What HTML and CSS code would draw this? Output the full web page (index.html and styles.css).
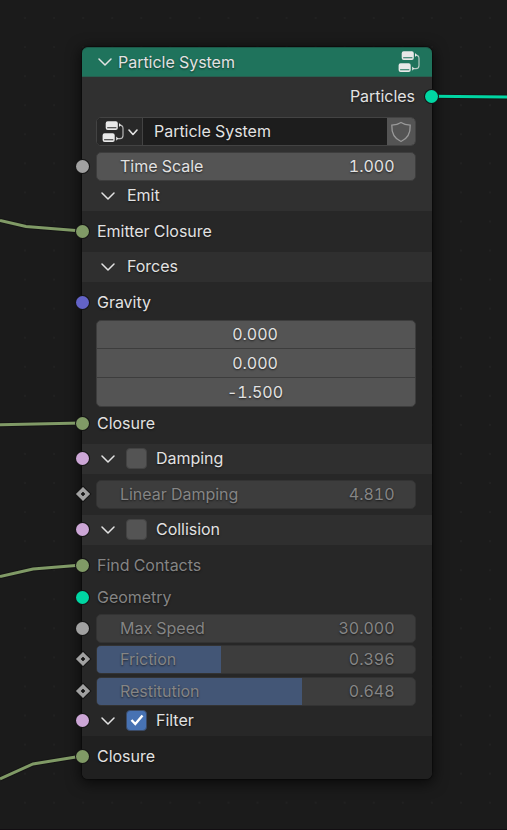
FILE: index.html
```html
<!DOCTYPE html>
<html lang="en">
<head>
<meta charset="utf-8">
<title>Particle System</title>
<link rel="stylesheet" href="styles.css">
</head>
<body>
<svg class="defs" width="0" height="0">
  <defs>
    <symbol id="chevron" viewBox="0 0 14 8"><path d="M1 1 L7 7 L13 1" fill="none" stroke="currentColor" stroke-width="1.5" stroke-linecap="round" stroke-linejoin="round"/></symbol>
    <symbol id="nodetree" viewBox="0 0 24 24">
      <path fill="currentColor" fill-rule="evenodd" d="M6.700 1.200h8.100a2 2 0 0 1 2 2v4.900a2 2 0 0 1-2 2H6.700a2 2 0 0 1-2-2V3.200a2 2 0 0 1 2-2zM6.200 7.200v1.100h9.200V7.200z"/>
      <path fill="currentColor" fill-rule="evenodd" d="M3.600 13.200h8.100a2 2 0 0 1 2 2v4.900a2 2 0 0 1-2 2H3.600a2 2 0 0 1-2-2v-4.900a2 2 0 0 1 2-2zM3.100 19.200v1.100h9.200v-1.100z"/>
      <path fill="none" stroke="currentColor" stroke-opacity=".75" stroke-width="1.200" d="M18.500 5.200 Q22 5.400 22 8.500 V15.500 Q22 18.600 19 18.600 H16"/>
      <path fill="currentColor" d="M18 3 L20 5 L18 7zM15.200 16.500 L17.300 18.600 L15.200 20.700z"/>
    </symbol>
  </defs>
</svg>
<main class="canvas">
  <svg class="wires" width="507" height="830" viewBox="0 0 507 830">
    <g class="wire-outline"><path d="M0 220.500 L26 226.500 L82 231"/><path d="M0 424.800 L82 423"/><path d="M0 576.500 L33 569 L82 565"/><path d="M0 779 L33 764 L82 756"/><path d="M432 96.300 L507 97"/></g>
    <g class="wire"><path d="M0 220.500 L26 226.500 L82 231"/><path d="M0 424.800 L82 423"/><path d="M0 576.500 L33 569 L82 565"/><path d="M0 779 L33 764 L82 756"/></g>
    <path class="wire geo" d="M432 96.300 L507 97"/>
  </svg>
  <section class="node">
    <header class="header">
      <svg class="chev"><use href="#chevron"/></svg>
      <span class="title">Particle System</span>
      <svg class="tree"><use href="#nodetree"/></svg>
    </header>
    <div class="group root">
      <div class="row output">Particles<i class="socket out teal"></i></div>
      <div class="row picker">
        <div class="id">
          <div class="browse"><svg class="tree"><use href="#nodetree"/></svg><svg class="mini" viewBox="0 0 10 7"><path d="M1 1 L5 5.500 L9 1"/></svg></div>
          <div class="name">Particle System</div>
          <div class="shield"><svg width="22" height="22" viewBox="0 0 22 22"><path d="M11 1.500 Q7.500 4 1.800 4.100 C1.500 12 3.500 17.500 11 20.500 C18.500 17.500 20.500 12 20.200 4.100 Q14.500 4 11 1.500z"/></svg></div>
        </div>
      </div>
      <div class="row scale"><i class="socket gray"></i><div class="field"><span>Time Scale</span><span>1.000</span></div></div>
      <div class="row panel"><svg class="chev"><use href="#chevron"/></svg>Emit</div>
    </div>
    <div class="group emit"><div class="row"><i class="socket olive"></i>Emitter Closure</div></div>
    <div class="row panel bar"><svg class="chev"><use href="#chevron"/></svg>Forces</div>
    <div class="group forces">
      <div class="row"><i class="socket blue"></i>Gravity</div>
      <div class="vector"><span>0.000</span><span>0.000</span><span>-1.500</span></div>
      <div class="row"><i class="socket olive"></i>Closure</div>
    </div>
    <div class="row panel bar"><i class="socket pink"></i><svg class="chev"><use href="#chevron"/></svg><b class="check"></b>Damping</div>
    <div class="group emit"><div class="row"><i class="socket diamond"></i><div class="field off"><span>Linear Damping</span><span>4.810</span></div></div></div>
    <div class="row panel bar"><i class="socket pink"></i><svg class="chev"><use href="#chevron"/></svg><b class="check"></b>Collision</div>
    <div class="group contacts">
      <div class="row dim"><i class="socket olive"></i>Find Contacts</div>
      <div class="row dim"><i class="socket teal"></i>Geometry</div>
      <div class="row slot"><i class="socket gray"></i><div class="field off"><span>Max Speed</span><span>30.000</span></div></div>
      <div class="row slot"><i class="socket diamond"></i><div class="field off"><em style="width:39.0%"></em><span>Friction</span><span>0.396</span></div></div>
      <div class="row slot tall"><i class="socket diamond"></i><div class="field off"><em style="width:64.500%"></em><span>Restitution</span><span>0.648</span></div></div>
      <div class="row panel"><i class="socket pink"></i><svg class="chev"><use href="#chevron"/></svg><b class="check on"><svg width="14" height="12" viewBox="0 0 14 12"><path d="M1.500 6 L5.300 10 L12.500 1.500"/></svg></b>Filter</div>
    </div>
    <div class="group last"><div class="row"><i class="socket olive"></i>Closure</div></div>
  </section>
</main>
</body>
</html>
```
FILE: styles.css
```css
* { box-sizing: border-box; }
body { margin: 0; background: #1b1b1b; font: 16px/20px Inter, "Liberation Sans", sans-serif; font-variant-numeric: tabular-nums; letter-spacing: -.03px; color: #e2e2e2; }
.defs { position: absolute; }
.canvas {
  position: relative; width: 507px; height: 830px; padding: 47px 75px 0 82px; overflow: hidden;
  background: radial-gradient(circle at 14.500px 14.500px, #212121 1px, transparent 1.500px) 10.500px 3.500px / 29.070px 29.070px #1b1b1b;
  border-bottom: 1px solid #120e12;
}
.wires { position: absolute; left: 0; top: 0; z-index: 1; }
.wires path { fill: none; }
.wire-outline path { stroke: #151515; stroke-width: 5; }
.wire path, path.wire { stroke: #809a66; stroke-width: 3; }
path.geo { stroke: #00d6a3; }
.node {
  display: flex; flex-direction: column; width: 350px; height: 732px; border-radius: 6px;
  background: #272727; text-shadow: 0 1px 2px rgba(0,0,0,.6);
  box-shadow: 0 0 1px 1px rgba(0,0,0,.35), 0 3px 14px 2px rgba(0,0,0,.6);
}
.header { display: flex; align-items: center; height: 30px; padding: 0 11px 0 16px; background: #1f735c; border-radius: 6px 6px 0 0; border-top: 1px solid #1c5a4a; border-bottom: 1px solid #275f50; }
.title { margin-left: 6px; flex: 1; }
.chev { width: 14px; height: 8px; flex: none; }
.tree { width: 24px; height: 24px; flex: none; color: #e8e8e8; }
.group { flex: none; }
.row { position: relative; display: flex; align-items: center; height: 32px; padding: 0 16px 0 15px; flex: none; }
.root { background: #303030; }
.row.output { height: 38px; justify-content: flex-end; padding-right: 17px; }
.row.picker { height: 33px; padding-left: 14px; }
.id { display: flex; width: 320px; height: 29px; border: 1px solid #434343; border-radius: 5px; background: #1d1d1d; overflow: hidden; }
.browse { display: flex; align-items: center; width: 46px; padding-left: 4px; background: #282828; border-right: 1px solid #434343; }
.mini { width: 10px; height: 7px; margin: 2px 0 0 3px; flex: none; }
.mini path { fill: none; stroke: currentColor; stroke-width: 1.600; stroke-linecap: round; stroke-linejoin: round; }
.name { flex: 1; padding: 3px 0 0 11px; }
.shield { display: flex; align-items: center; justify-content: center; width: 28px; background: #545454; }
.shield path { fill: none; stroke: #999; stroke-width: 1.300; }
.row.scale { height: 30px; margin-top: 3px; }
.row.panel { height: 30px; padding-left: 19px; padding-bottom: 2px; }
.row.panel .chev { margin: 1px 12px 0 0; }
.bar { background: #2f2f2f; }
.emit .row { height: 41px; padding-bottom: 1px; }
.forces { height: 162px; padding-top: 2px; }
.forces .row:first-child { height: 36px; }
.vector { width: 320px; height: 87px; margin-left: 14px; border: 1px solid #3d3d3d; border-radius: 5px; background: #545454; overflow: hidden; }
.vector span { display: flex; align-items: center; justify-content: center; height: 29px; border-bottom: 1px solid #3d3d3d; padding-right: 2px; }
.vector span:first-child { height: 28px; padding-bottom: 1px; }
.vector span:last-child { border: 0; height: 28px; padding-bottom: 1px; }
.field { position: relative; display: flex; align-items: center; justify-content: space-between; flex: none; width: 320px; height: 29px; margin-left: -1px; padding: 0 20.500px 0 23px; border: 1px solid #3d3d3d; border-radius: 5px; background: #545454; overflow: hidden; }
.field span { position: relative; }
.field.off { background: #3d3d3d; border-color: #333; color: #858585; }
.field em { position: absolute; left: 0; top: 0; height: 100%; background: #435676; }
.dim { color: #858585; }
.contacts { height: 191px; padding-top: 4px; }
.row.slot { height: 31px; }
.slot .field { padding-bottom: 1px; }
.row.tall { height: 31px; padding-top: 1px; }
.check { display: flex; align-items: center; justify-content: center; width: 21px; height: 21px; margin: 0 9px 0 -1px; border: 1px solid #434343; border-radius: 4px; background: #545454; }
.check.on { background: #4772b3; border-color: #3a4a66; }
.check path { fill: none; stroke: #fff; stroke-width: 2.400; }
.last { height: 43px; background: #202020; border-radius: 0 0 6px 6px; }
.last .row { height: 40px; }
.socket { position: absolute; z-index: 2; left: -6px; top: calc(50% - 6.500px); width: 13px; height: 13px; border-radius: 50%; box-shadow: 0 0 0 1px #151515; }
.panel .socket { top: calc(50% - 7px); }
.socket.out { left: auto; right: -6px; }
.gray { background: #a1a1a1; }
.olive { background: #809a66; }
.teal { background: #00d6a3; }
.blue { background: #6363c7; }
.pink { background: #cca6d6; }
.diamond { left: -4.500px; top: calc(50% - 5.500px); width: 10px; height: 10px; border-radius: 0; transform: rotate(45deg); background: radial-gradient(circle, #161616 1.500px, #a1a1a1 2px); }
.tall .diamond { top: calc(50% - 4.500px); }
```
